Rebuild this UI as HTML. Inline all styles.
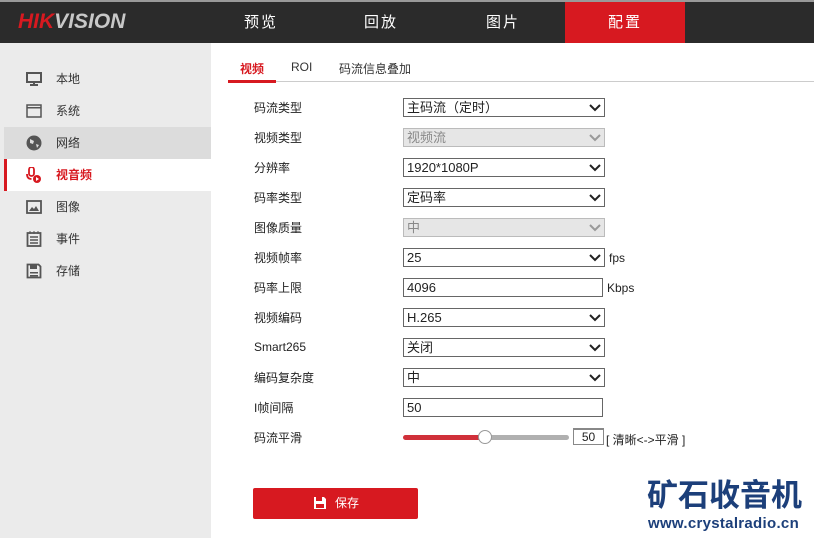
<!DOCTYPE html>
<html><head><meta charset="utf-8"><style>
*{margin:0;padding:0;box-sizing:border-box}
body{width:814px;height:538px;overflow:hidden;background:#fff;font-family:"Liberation Sans","Noto Sans CJK SC",sans-serif;font-size:12px;color:#222;position:relative}
#top{position:absolute;left:0;top:0;width:814px;height:43px;background:#2b2b2b;border-top:2px solid #999}
#logo{position:absolute;left:18px;top:8px;font:italic bold 21px "Liberation Sans",sans-serif;letter-spacing:0px}
.nav{position:absolute;top:0;height:41px;width:120px;line-height:41px;text-align:center;color:#fff;font-size:15px;letter-spacing:2px}
#left{position:absolute;left:0;top:43px;width:211px;height:495px;background:#ebebeb}
.mi{position:absolute;left:4px;width:207px;height:32px;line-height:32px;padding-left:52px;font-size:12px;color:#333}
.ic{position:absolute;left:22px;top:8px;width:16px;height:16px}
.lab{position:absolute;left:254px;font-size:12px}
.sel{position:absolute;left:403px;width:202px;height:19px;border:1px solid #666;background:#fff;padding-left:3px;line-height:17px;font-size:13px}
.sel.dis{background:#e6e6e6;border-color:#bbb;color:#888}
.sel svg{position:absolute;right:3px;top:4px}
.unit{position:absolute;left:609px;font-size:12px}
</style></head><body>
<div id="top">
<div id="logo"><span style="color:#d71920">HIK</span><span style="color:#c8c8c8">VISION</span></div>
<div class="nav" style="left:201px">预览</div>
<div class="nav" style="left:321px">回放</div>
<div class="nav" style="left:443px">图片</div>
<div class="nav" style="left:565px;background:#d71920">配置</div>
</div>
<div id="left">
<div class="mi" style="top:20px"><svg class="ic" viewBox="0 0 16 16"><rect x="1" y="2" width="14" height="9" fill="none" stroke="#555" stroke-width="2"/><rect x="7" y="11" width="2" height="2" fill="#555"/><rect x="4" y="13" width="8" height="2" fill="#555"/></svg>本地</div>
<div class="mi" style="top:52px"><svg class="ic" viewBox="0 0 16 16"><rect x="1" y="2" width="14" height="12" fill="none" stroke="#555" stroke-width="1.5"/><rect x="1" y="4" width="14" height="1.5" fill="#555"/></svg>系统</div>
<div class="mi" style="top:84px;background:#dcdcdc"><svg class="ic" viewBox="0 0 16 16"><circle cx="8" cy="8" r="7.5" fill="#555"/><path d="M4 4 L8 6 L7 9 L4 8Z M10 9 L13 10 L11 13Z" fill="#dcdcdc"/></svg>网络</div>
<div class="mi" style="top:116px;background:#fff;color:#d71920;font-weight:bold;box-shadow:inset 3px 0 0 #d71920"><svg class="ic" viewBox="0 0 16 16" style="left:21px"><rect x="4" y="0" width="5" height="9" rx="2.5" fill="none" stroke="#d71920" stroke-width="1.8"/><path d="M2 7 Q2 12 6.5 12" fill="none" stroke="#d71920" stroke-width="1.8"/><circle cx="12" cy="12" r="4" fill="#d71920"/><path d="M11 10 L14 12 L11 14Z" fill="#fff"/></svg>视音频</div>
<div class="mi" style="top:148px"><svg class="ic" viewBox="0 0 16 16"><rect x="1" y="2" width="14" height="12" fill="none" stroke="#555" stroke-width="1.8"/><path d="M3 12 L6 8 L8 10 L10 7 L13 12Z" fill="#555"/></svg>图像</div>
<div class="mi" style="top:180px"><svg class="ic" viewBox="0 0 16 16"><rect x="1.5" y="2" width="13" height="13" fill="none" stroke="#555" stroke-width="1.8"/><path d="M4 6h8M4 9h8M4 12h8" stroke="#555" stroke-width="1.5"/><path d="M4 0v3M8 0v3M12 0v3" stroke="#555"/></svg>事件</div>
<div class="mi" style="top:212px"><svg class="ic" viewBox="0 0 16 16"><path d="M1.5 1.5h11l2 2v11h-13z" fill="none" stroke="#555" stroke-width="1.8"/><rect x="4" y="2" width="7" height="4" fill="#555"/><rect x="4" y="9" width="8" height="1.5" fill="#555"/><rect x="4" y="12" width="8" height="1.5" fill="#555"/></svg>存储</div>
</div>
<div style="position:absolute;left:228px;top:81px;width:586px;height:1px;background:#ccc"></div>
<div style="position:absolute;left:240px;top:60px;color:#d71920;font-weight:bold;font-size:12px">视频</div>
<div style="position:absolute;left:228px;top:80px;width:48px;height:3px;background:#d71920"></div>
<div style="position:absolute;left:291px;top:60px;font-size:12px;color:#333">ROI</div>
<div style="position:absolute;left:339px;top:60px;font-size:12px;color:#333">码流信息叠加</div>

<div class="lab" style="top:99px">码流类型</div><div class="sel" style="top:98px">主码流（定时）<svg width="12" height="10"><path d="M1 2 L6 7 L11 2" fill="none" stroke="#222" stroke-width="2"/></svg></div>
<div class="lab" style="top:129px">视频类型</div><div class="sel dis" style="top:128px">视频流<svg width="12" height="10"><path d="M1 2 L6 7 L11 2" fill="none" stroke="#999" stroke-width="2"/></svg></div>
<div class="lab" style="top:159px">分辨率</div><div class="sel" style="top:158px">1920*1080P<svg width="12" height="10"><path d="M1 2 L6 7 L11 2" fill="none" stroke="#222" stroke-width="2"/></svg></div>
<div class="lab" style="top:189px">码率类型</div><div class="sel" style="top:188px">定码率<svg width="12" height="10"><path d="M1 2 L6 7 L11 2" fill="none" stroke="#222" stroke-width="2"/></svg></div>
<div class="lab" style="top:219px">图像质量</div><div class="sel dis" style="top:218px">中<svg width="12" height="10"><path d="M1 2 L6 7 L11 2" fill="none" stroke="#999" stroke-width="2"/></svg></div>
<div class="lab" style="top:249px">视频帧率</div><div class="sel" style="top:248px">25<svg width="12" height="10"><path d="M1 2 L6 7 L11 2" fill="none" stroke="#222" stroke-width="2"/></svg></div><div class="unit" style="top:251px">fps</div>
<div class="lab" style="top:279px">码率上限</div><div class="sel" style="top:278px;width:200px">4096</div><div class="unit" style="top:281px;left:607px">Kbps</div>
<div class="lab" style="top:309px">视频编码</div><div class="sel" style="top:308px">H.265<svg width="12" height="10"><path d="M1 2 L6 7 L11 2" fill="none" stroke="#222" stroke-width="2"/></svg></div>
<div class="lab" style="top:340px">Smart265</div><div class="sel" style="top:338px">关闭<svg width="12" height="10"><path d="M1 2 L6 7 L11 2" fill="none" stroke="#222" stroke-width="2"/></svg></div>
<div class="lab" style="top:369px">编码复杂度</div><div class="sel" style="top:368px">中<svg width="12" height="10"><path d="M1 2 L6 7 L11 2" fill="none" stroke="#222" stroke-width="2"/></svg></div>
<div class="lab" style="top:399px">I帧间隔</div><div class="sel" style="top:398px;width:200px">50</div>
<div class="lab" style="top:429px">码流平滑</div>
<div style="position:absolute;left:403px;top:435px;width:82px;height:5px;border-radius:3px;background:#d0303a"></div>
<div style="position:absolute;left:485px;top:435px;width:84px;height:5px;border-radius:3px;background:#b0b0b0"></div>
<div style="position:absolute;left:478px;top:430px;width:14px;height:14px;border-radius:50%;background:#fff;border:1px solid #999"></div>
<div style="position:absolute;left:573px;top:428px;width:31px;height:17px;border:1px solid #888;border-top-width:2px;text-align:center;line-height:14px;font-size:12px">50</div>
<div style="position:absolute;left:606px;top:431px;font-size:12px">[ 清晰&lt;-&gt;平滑 ]</div>

<div style="position:absolute;left:253px;top:488px;width:165px;height:31px;background:#d71920;border-radius:2px;color:#fff;line-height:31px;font-size:12px;padding-left:82px"><svg style="position:absolute;left:60px;top:8px" width="14" height="14" viewBox="0 0 14 14"><path d="M1 1h10l2 2v10H1z" fill="#fff"/><rect x="3" y="1" width="6" height="4" fill="#d71920"/><rect x="3" y="8" width="8" height="4" fill="#d71920"/></svg>保存</div>
<div style="position:absolute;left:647px;top:475px;font:bold 31px 'Noto Sans CJK SC',sans-serif;color:#1c3f7a;letter-spacing:0px;line-height:36px;white-space:nowrap">矿石收音机</div>
<div style="position:absolute;left:648px;top:515px;font:bold 15px 'Liberation Sans',sans-serif;color:#1c3f7a;letter-spacing:0.3px;white-space:nowrap">www.crystalradio.cn</div>
</body></html>
